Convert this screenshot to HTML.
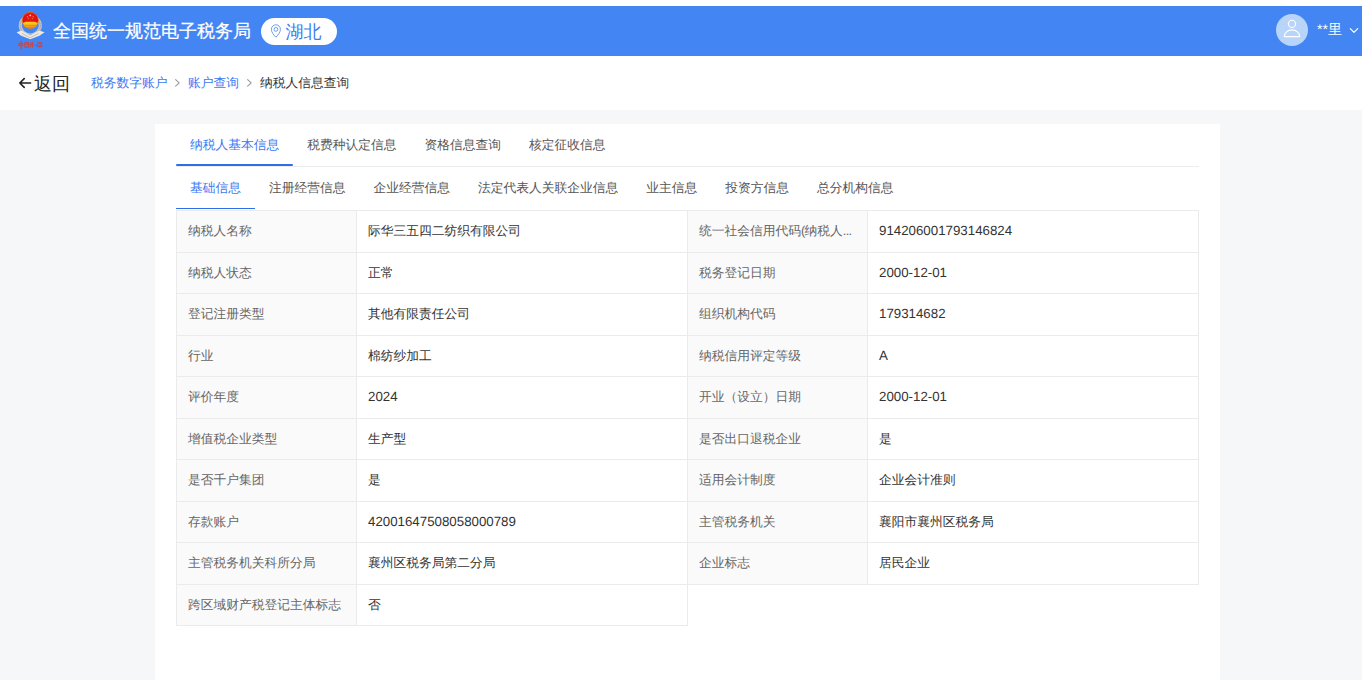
<!DOCTYPE html>
<html><head><meta charset="utf-8">
<style>
*{box-sizing:border-box;margin:0;padding:0}
html,body{width:1362px;height:680px;overflow:hidden;background:#fff;font-family:"Liberation Sans",sans-serif;text-rendering:geometricPrecision}
.abs{position:absolute}
#hdr{position:absolute;left:0;top:6px;width:1362px;height:50px;background:#4386f3}
#title{position:absolute;left:53px;top:19px;-webkit-text-stroke:0.25px #fff;font-size:18px;line-height:24px;color:#fff;white-space:nowrap}
#pill{position:absolute;left:261px;top:17.6px;width:76px;height:27.4px;border-radius:14px;background:#fff}
#pilltxt{position:absolute;left:285.5px;top:19.5px;font-size:18px;line-height:24px;color:#3f7cf0;white-space:nowrap}
#avatar{position:absolute;left:1276px;top:14px;width:32px;height:32px;border-radius:50%;background:#b8d4f8}
#uname{position:absolute;left:1317px;top:20px;font-size:14px;line-height:18px;color:#fff;white-space:nowrap}
#crumb{position:absolute;left:0;top:56px;width:1362px;height:54px;background:#fff}
#back{position:absolute;left:34px;top:71.5px;font-size:18px;line-height:24px;color:#222;white-space:nowrap}
.bc{position:absolute;top:74px;font-size:12.75px;line-height:18px;white-space:nowrap}
#gray{position:absolute;left:0;top:110px;width:1362px;height:570px;background:#f6f7f9}
#card{position:absolute;left:155px;top:124px;width:1065px;height:556px;background:#fff}
.tab{position:absolute;font-size:12.75px;line-height:18px;color:#555;white-space:nowrap}
.tab.on{color:#3a7af2}
#tbl{position:absolute;left:176px;top:210px;width:1023px}
.cell{position:absolute;font-size:12.75px;line-height:18px;white-space:nowrap}

.lb{position:absolute;background:#fafafa}
.hl{position:absolute;left:176px;height:1px;background:#ebebeb}
.vl{position:absolute;width:1px;background:#ebebeb}
.lab{color:#666}
.val{color:#333}
.num{font-size:13.3px}
</style></head><body>
<div id="hdr"></div>
<svg class="abs" style="left:14px;top:10px" width="34" height="42" viewBox="14 10 34 42">
<defs><radialGradient id="rg" cx="50%" cy="35%" r="65%"><stop offset="0" stop-color="#ea1a1a"/><stop offset="0.72" stop-color="#dc1012"/><stop offset="1" stop-color="#f07a14"/></radialGradient>
<linearGradient id="gg" x1="0" y1="0" x2="0" y2="1"><stop offset="0" stop-color="#ffd41c"/><stop offset="0.6" stop-color="#f8a41a"/><stop offset="1" stop-color="#e8601a"/></linearGradient>
<clipPath id="cc"><circle cx="30.3" cy="20.3" r="8.3"/></clipPath></defs>
<ellipse cx="30.3" cy="25.6" rx="10" ry="9.4" fill="none" stroke="#c2c2c2" stroke-width="3.2"/>
<ellipse cx="30.3" cy="25.6" rx="10" ry="9.4" fill="none" stroke="#7a7a7a" stroke-width="0.9" stroke-dasharray="1.1 1.2" stroke-opacity="0.7"/>
<circle cx="30.3" cy="20.3" r="8.3" fill="url(#rg)"/>
<g clip-path="url(#cc)"><path d="M22.5 23.2L25.6 21.8L35 21.8L38.1 23.2L37 25L37 30L23.6 30L23.6 25Z" fill="url(#gg)"/>
<path d="M24 25.4H36.6M24.4 27.4H36.2" stroke="#e66a1a" stroke-width="0.6" fill="none"/></g>
<circle cx="30.3" cy="20.3" r="8.1" fill="none" stroke="#f08a1a" stroke-width="0.8" stroke-opacity="0.75"/>
<circle cx="30.3" cy="15.3" r="0.85" fill="#ffe880"/>
<circle cx="27.4" cy="16.7" r="0.5" fill="#ffd860"/><circle cx="33.2" cy="16.7" r="0.5" fill="#ffd860"/>
<circle cx="28.2" cy="18.7" r="0.45" fill="#ffc860"/><circle cx="32.4" cy="18.7" r="0.45" fill="#ffc860"/>
<path d="M16.6 32.2L21.6 30.6L30.3 35.4L39 30.6L44.6 32.2L39.4 35.8L30.3 39.2L21.2 35.8Z" fill="#ebe8e3"/>
<path d="M22 33.4L30.3 37.8L38.6 33.4" fill="none" stroke="#b3ada4" stroke-width="0.7"/>
<g fill="none" stroke="#e23a26" stroke-width="0.9" stroke-linecap="round">
<path d="M19.2 43.4h3.6v2.4h-3.6z M21 41.2v8.2"/>
<path d="M25.2 42.6h3.4v4.6h-3.4z M26 44.2h1.8" />
<path d="M30.8 42.8v4.2 M32.6 42.4v4.8 M31.4 44.6h0.8"/>
<path d="M35.2 45.4h1.6 M38 42.8h3.8v4h-3.8z M39.9 42.6v4.4"/>
</g>
</svg>
<div id="title">全国统一规范电子税务局</div>
<div id="pill"></div>
<svg class="abs" style="left:260px;top:15px" width="30" height="30" viewBox="260 15 30 30"><path d="M275.9 37.2C273.2 34.4 271.4 32 271.4 29.3A4.5 4.5 0 0 1 280.4 29.3C280.4 32 278.6 34.4 275.9 37.2Z" fill="none" stroke="#6a9cf4" stroke-width="1"/><circle cx="275.9" cy="29.4" r="1.9" fill="none" stroke="#6a9cf4" stroke-width="1"/></svg>
<div id="pilltxt">湖北</div>
<div id="avatar"></div>
<svg class="abs" style="left:1270px;top:6px" width="92" height="50" viewBox="1270 6 92 50"><circle cx="1292" cy="23.9" r="3.6" fill="none" stroke="#fff" stroke-width="1.1"/><path d="M1284.3 36.6A7.7 6.8 0 0 1 1299.7 36.6Z" fill="none" stroke="#fff" stroke-width="1.1" stroke-linejoin="round"/><path d="M1350.3 28.6L1354 32.4L1357.7 28.6" fill="none" stroke="#fff" stroke-width="1.2" stroke-linecap="round" stroke-linejoin="round"/></svg>
<div id="uname">**里</div>
<div id="crumb"></div>
<svg class="abs" style="left:0;top:0" width="60" height="110" viewBox="0 0 60 110"><path d="M30.6 83H19.8M24.2 78.6L19.8 83L24.2 87.4" fill="none" stroke="#222" stroke-width="1.6" stroke-linecap="round" stroke-linejoin="round"/></svg>
<div id="back">返回</div>
<div class="bc" style="left:91px;color:#3a7af2">税务数字账户</div>
<svg class="abs" style="left:170px;top:74px" width="90" height="16" viewBox="170 74 90 16"><path d="M175.6 79.6L179.2 82.9L175.6 86.2M247.6 79.6L251.2 82.9L247.6 86.2" fill="none" stroke="#9a9a9a" stroke-width="1.1" stroke-linecap="round" stroke-linejoin="round"/></svg>
<div class="bc" style="left:188px;color:#3a7af2">账户查询</div>
<div class="bc" style="left:260px;color:#333">纳税人信息查询</div>
<div id="gray"></div>
<div id="card"></div>
<div class="tab on" style="left:190px;top:136px">纳税人基本信息</div>
<div class="tab" style="left:307.25px;top:136px">税费种认定信息</div>
<div class="tab" style="left:424.5px;top:136px">资格信息查询</div>
<div class="tab" style="left:529.0px;top:136px">核定征收信息</div>
<div class="tab on" style="left:190px;top:179px">基础信息</div>
<div class="tab" style="left:269.0px;top:179px">注册经营信息</div>
<div class="tab" style="left:373.5px;top:179px">企业经营信息</div>
<div class="tab" style="left:478.0px;top:179px">法定代表人关联企业信息</div>
<div class="tab" style="left:646.25px;top:179px">业主信息</div>
<div class="tab" style="left:725.25px;top:179px">投资方信息</div>
<div class="tab" style="left:817.0px;top:179px">总分机构信息</div>
<div class="abs" style="left:176px;top:166px;width:1023px;height:1px;background:#ededed"></div>
<div class="abs" style="left:176px;top:164px;width:117px;height:2px;background:#2c6fe8;border-radius:1px"></div>
<div class="abs" style="left:176px;top:208px;width:79px;height:1px;background:#2c6fe8"></div>
<div class="lb" style="left:177px;top:211px;width:179px;height:41px"></div>
<div class="lb" style="left:688px;top:211px;width:179px;height:41px"></div>
<div class="lb" style="left:177px;top:253px;width:179px;height:40px"></div>
<div class="lb" style="left:688px;top:253px;width:179px;height:40px"></div>
<div class="lb" style="left:177px;top:294px;width:179px;height:41px"></div>
<div class="lb" style="left:688px;top:294px;width:179px;height:41px"></div>
<div class="lb" style="left:177px;top:336px;width:179px;height:40px"></div>
<div class="lb" style="left:688px;top:336px;width:179px;height:40px"></div>
<div class="lb" style="left:177px;top:377px;width:179px;height:41px"></div>
<div class="lb" style="left:688px;top:377px;width:179px;height:41px"></div>
<div class="lb" style="left:177px;top:419px;width:179px;height:40px"></div>
<div class="lb" style="left:688px;top:419px;width:179px;height:40px"></div>
<div class="lb" style="left:177px;top:460px;width:179px;height:41px"></div>
<div class="lb" style="left:688px;top:460px;width:179px;height:41px"></div>
<div class="lb" style="left:177px;top:502px;width:179px;height:40px"></div>
<div class="lb" style="left:688px;top:502px;width:179px;height:40px"></div>
<div class="lb" style="left:177px;top:543px;width:179px;height:41px"></div>
<div class="lb" style="left:688px;top:543px;width:179px;height:41px"></div>
<div class="lb" style="left:177px;top:585px;width:179px;height:40px"></div>
<div class="hl" style="top:210px;width:1023px"></div>
<div class="hl" style="top:252px;width:1023px"></div>
<div class="hl" style="top:293px;width:1023px"></div>
<div class="hl" style="top:335px;width:1023px"></div>
<div class="hl" style="top:376px;width:1023px"></div>
<div class="hl" style="top:418px;width:1023px"></div>
<div class="hl" style="top:459px;width:1023px"></div>
<div class="hl" style="top:501px;width:1023px"></div>
<div class="hl" style="top:542px;width:1023px"></div>
<div class="hl" style="top:584px;width:1023px"></div>
<div class="hl" style="top:625px;width:512px"></div>
<div class="vl" style="left:176px;top:210px;height:416px"></div>
<div class="vl" style="left:356px;top:210px;height:416px"></div>
<div class="vl" style="left:687px;top:210px;height:416px"></div>
<div class="vl" style="left:867px;top:210px;height:375px"></div>
<div class="vl" style="left:1198px;top:210px;height:375px"></div>
<div class="cell lab" style="left:188px;top:222.0px">纳税人名称</div>
<div class="cell val" style="left:368px;top:222.0px">际华三五四二纺织有限公司</div>
<div class="cell lab" style="left:699px;top:222.0px">统一社会信用代码<span style="margin-right:-0.8px">(</span>纳税人<span style="letter-spacing:-0.6px">...</span></div>
<div class="cell val num" style="left:879px;top:222.0px">914206001793146824</div>
<div class="cell lab" style="left:188px;top:263.5px">纳税人状态</div>
<div class="cell val" style="left:368px;top:263.5px">正常</div>
<div class="cell lab" style="left:699px;top:263.5px">税务登记日期</div>
<div class="cell val num" style="left:879px;top:263.5px">2000-12-01</div>
<div class="cell lab" style="left:188px;top:305.0px">登记注册类型</div>
<div class="cell val" style="left:368px;top:305.0px">其他有限责任公司</div>
<div class="cell lab" style="left:699px;top:305.0px">组织机构代码</div>
<div class="cell val num" style="left:879px;top:305.0px">179314682</div>
<div class="cell lab" style="left:188px;top:346.5px">行业</div>
<div class="cell val" style="left:368px;top:346.5px">棉纺纱加工</div>
<div class="cell lab" style="left:699px;top:346.5px">纳税信用评定等级</div>
<div class="cell val num" style="left:879px;top:346.5px">A</div>
<div class="cell lab" style="left:188px;top:388.0px">评价年度</div>
<div class="cell val num" style="left:368px;top:388.0px">2024</div>
<div class="cell lab" style="left:699px;top:388.0px">开业（设立）日期</div>
<div class="cell val num" style="left:879px;top:388.0px">2000-12-01</div>
<div class="cell lab" style="left:188px;top:429.5px">增值税企业类型</div>
<div class="cell val" style="left:368px;top:429.5px">生产型</div>
<div class="cell lab" style="left:699px;top:429.5px">是否出口退税企业</div>
<div class="cell val" style="left:879px;top:429.5px">是</div>
<div class="cell lab" style="left:188px;top:471.0px">是否千户集团</div>
<div class="cell val" style="left:368px;top:471.0px">是</div>
<div class="cell lab" style="left:699px;top:471.0px">适用会计制度</div>
<div class="cell val" style="left:879px;top:471.0px">企业会计准则</div>
<div class="cell lab" style="left:188px;top:512.5px">存款账户</div>
<div class="cell val num" style="left:368px;top:512.5px">42001647508058000789</div>
<div class="cell lab" style="left:699px;top:512.5px">主管税务机关</div>
<div class="cell val" style="left:879px;top:512.5px">襄阳市襄州区税务局</div>
<div class="cell lab" style="left:188px;top:554.0px">主管税务机关科所分局</div>
<div class="cell val" style="left:368px;top:554.0px">襄州区税务局第二分局</div>
<div class="cell lab" style="left:699px;top:554.0px">企业标志</div>
<div class="cell val" style="left:879px;top:554.0px">居民企业</div>
<div class="cell lab" style="left:188px;top:595.5px">跨区域财产税登记主体标志</div>
<div class="cell val" style="left:368px;top:595.5px">否</div>
</body></html>
